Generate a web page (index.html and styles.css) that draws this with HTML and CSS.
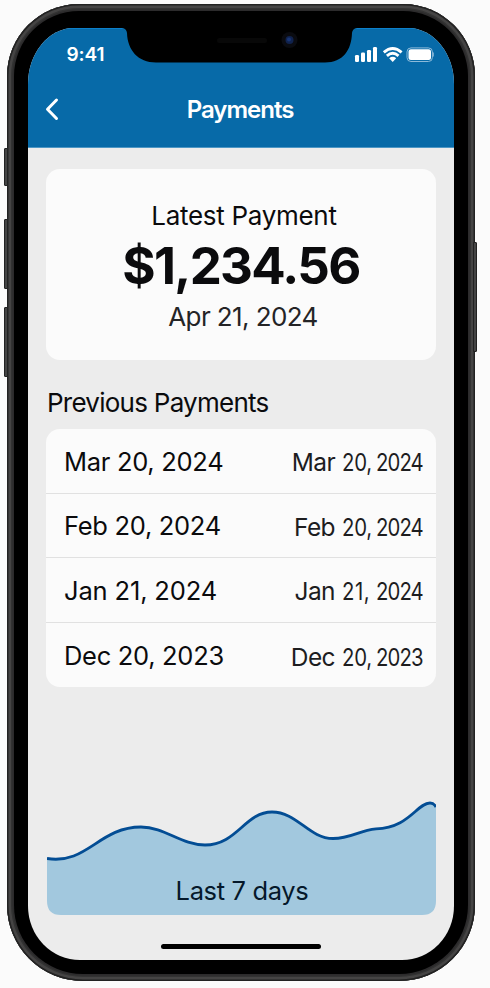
FILE: index.html
```html
<!DOCTYPE html>
<html lang="en">
<head>
<meta charset="utf-8">
<title>Payments</title>
<link rel="stylesheet" href="styles.css">
</head>
<body>
<div class="phone">
  <i class="key key-mute"></i><i class="key key-up"></i><i class="key key-down"></i><i class="key key-power"></i>
  <div class="bezel">
    <main class="screen">
      <header class="header">
        <svg class="notch" viewBox="0 0 232 36" aria-hidden="true">
          <path class="notch-shape" d="M-3 -1H232V0Q227.500 .3 227 5C226.500 22 218 34.500 200 34.500H31C13 34.500 2.500 22 2 5Q1.500 .3 -3 0Z"/>
          <rect x="92" y="10" width="50" height="5" rx="2.500" fill="#080808"/>
          <circle cx="164.500" cy="12" r="8" fill="#0a0b10"/>
          <circle cx="164.500" cy="12" r="4" fill="#10224d"/>
          <circle cx="164" cy="11.500" r="2" fill="#183575"/>
        </svg>
        <div class="status">
          <span class="time">9:41</span>
          <svg class="status-icons" viewBox="0 0 80 18" aria-hidden="true">
            <g fill="#fff">
              <rect x="1" y="10" width="4" height="7" rx="1.200"/>
              <rect x="7" y="7.500" width="4" height="9.500" rx="1.200"/>
              <rect x="13" y="5" width="4" height="12" rx="1.200"/>
              <rect x="19" y="2" width="4" height="15" rx="1.200"/>
              <path d="M35.200 13.300Q38.700 10.400 42.200 13.300L38.700 17Z"/>
              <rect x="54.500" y="4.300" width="22.500" height="10.800" rx="2.500"/>
            </g>
            <g fill="none" stroke="#fff" stroke-width="2.900">
              <path d="M29.800 7.300Q38.700 -.5 47.600 7.300"/>
              <path d="M32.900 10.800Q38.700 5.700 44.500 10.800"/>
            </g>
            <rect x="53" y="2.900" width="25.400" height="13.600" rx="4" fill="none" stroke="#8dbad9" stroke-width="1"/>
            <path d="M79.300 7.500v4" stroke="#8dbad9" stroke-width="1"/>
          </svg>
        </div>
        <div class="nav">
          <svg class="back" viewBox="0 0 16 24" aria-hidden="true"><path d="M12.500 3 3.500 12.200 12.500 21.500"/></svg>
          <h1 class="title">Payments</h1>
        </div>
      </header>

      <section class="card latest">
        <p class="latest-label">Latest Payment</p>
        <p class="latest-amount">$1,234.56</p>
        <p class="latest-date">Apr 21, 2024</p>
      </section>

      <h2 class="section-title">Previous Payments</h2>
      <ul class="card list">
        <li class="row"><span class="row-name">Mar 20, 2024</span><span class="row-date"><span>Mar</span> <span class="num day">20,</span> <span class="num year">2024</span></span></li>
        <li class="row"><span class="row-name">Feb 20, 2024</span><span class="row-date"><span>Feb</span> <span class="num day">20,</span> <span class="num year">2024</span></span></li>
        <li class="row"><span class="row-name wide">Jan 21, 2024</span><span class="row-date"><span>Jan</span> <span class="num day day-wide">21,</span> <span class="num year">2024</span></span></li>
        <li class="row"><span class="row-name">Dec 20, 2023</span><span class="row-date"><span>Dec</span> <span class="num day">20,</span> <span class="num year">2023</span></span></li>
      </ul>

      <figure class="chart">
        <svg class="chart-plot" viewBox="0 0 389 115" aria-hidden="true">
          <path class="area" d="M0 58.500C40 65 52 27 94 27C118 27 134 45 158 45C190 45 198 12 225 12C250 12 262 38.500 286 38.500C304 38.500 312 30.500 329 28.800C362 28 370 3 383 3C386 3 388 5 389 7V101Q389 115 375 115H14Q0 115 0 101Z"/>
          <path class="line" d="M0 58.500C40 65 52 27 94 27C118 27 134 45 158 45C190 45 198 12 225 12C250 12 262 38.500 286 38.500C304 38.500 312 30.500 329 28.800C362 28 370 3 383 3C386 3 388 5 389 7"/>
        </svg>
        <figcaption class="chart-label">Last 7 days</figcaption>
      </figure>
      <div class="home-bar"></div>
    </main>
  </div>
</div>
</body>
</html>
```
FILE: styles.css
```css
* { box-sizing: border-box; margin: 0; padding: 0; }
body {
  width: 490px;
  height: 988px;
  padding: 4px 15px 7px 7px;
  overflow: hidden;
  background: #fbfbfb;
  font-family: Inter, "Liberation Sans", sans-serif;
  color: #0b0b0d;
}
.phone {
  position: relative;
  height: 977px;
  padding: 7px;
  border-radius: 72px 72px 76px 76px;
  background: #2c2b2c;
  box-shadow: inset 0 0 0 1.5px #222, inset 0 0 0 4px #454444, inset 0 0 0 5.5px #333;
}
.key {
  position: absolute;
  left: -3px;
  width: 4px;
  border: 1px solid #222;
  border-radius: 1px 0 0 1px;
  background: #444;
}
.key-mute { top: 144px; height: 38px; }
.key-up { top: 215px; height: 70px; }
.key-down { top: 303px; height: 70px; }
.key-power { left: 466px; top: 238px; height: 110px; border-radius: 0 1px 1px 0; }
.bezel {
  height: 963px;
  padding: 17px 14px 15px;
  border-radius: 65px 65px 69px 69px;
  background: #000;
}
.screen {
  display: flex;
  flex-direction: column;
  height: 932px;
  overflow: hidden;
  border-radius: 46px 46px 52px 52px / 56px 56px 54px 54px;
  background: #ececec;
}
.header {
  position: relative;
  flex: none;
  height: 120px;
  padding-top: 13px;
  background: #076aa8;
  border-bottom: 1px solid #4d97c5;
  box-shadow: inset 0 1px 0 #0c80cb;
}
.notch { position: absolute; left: 97px; top: 0; width: 232px; height: 36px; overflow: visible; }
.notch-shape { fill: #000; }
.status {
  display: flex;
  justify-content: space-between;
  height: 28px;
  padding: 0 20px 0 38.5px;
  color: #fff;
}
.time { font-size: 19px; font-weight: 600; line-height: 28px; letter-spacing: -.1px; }
.status-icons { width: 80px; height: 18px; margin-top: 4px; }
.nav {
  display: grid;
  grid-template-columns: 48px 1fr 48px;
  align-items: center;
  height: 40px;
  margin-top: 20px;
  color: #fff;
}
.back { width: 16px; height: 24px; margin-left: 16px; fill: none; stroke: #fff; stroke-width: 3; stroke-linecap: round; stroke-linejoin: round; }
.title { padding: 1px 2px 0 0; font-size: 24px; font-weight: 600; line-height: 39px; letter-spacing: -1px; text-align: center; }
.card { margin: 0 18px; border-radius: 14px; background: #fbfbfb; }
.latest {
  height: 191px;
  margin-top: 21px;
  padding: 30px 0 0 4px;
  text-align: center;
}
.latest-label { padding-left: 2px; font-size: 26px; line-height: 34px; letter-spacing: -.3px; }
.latest-amount { padding-right: 4px; font-size: 51px; font-weight: 650; line-height: 66px; letter-spacing: -1.7px; }
.latest-date { font-size: 26px; font-weight: 400; line-height: 36px; letter-spacing: -.6px; color: #242426; }
.section-title {
  height: 69px;
  padding: 26px 19px 0;
  font-size: 26px;
  font-weight: 400;
  line-height: 34px;
  letter-spacing: -.75px;
}
.list { height: 258px; list-style: none; }
.row {
  display: flex;
  justify-content: space-between;
  align-items: center;
  height: 64.6px;
  padding: 1px 13px 0 18px;
  border-bottom: 1px solid #e1e1e1;
}
.row:last-child { border-bottom: 0; }
.row-name { font-size: 25.5px; letter-spacing: -.3px; }
.row-name.wide { letter-spacing: -.15px; }
.row-date { display: flex; padding-top: 2px; font-size: 24.5px; font-weight: 400; letter-spacing: -.6px; white-space: nowrap; color: #1d1d1f; }
.num { transform: scaleX(.83); transform-origin: left; }
.day { width: 34px; margin-left: 7px; letter-spacing: -.3px; }
.day-wide { letter-spacing: .7px; }
.year { width: 47px; letter-spacing: -1.1px; }
.chart { display: grid; flex: none; width: 389px; height: 115px; margin: 113px 0 0 19px; }
.chart-plot, .chart-label { grid-area: 1 / 1; }
.chart-plot { width: 389px; height: 115px; }
.area { fill: #a2c8de; }
.line { fill: none; stroke: #034d94; stroke-width: 2.8; }
.chart-label {
  align-self: end;
  padding: 0 0 7px 1px;
  font-size: 25.5px;
  line-height: 34px;
  letter-spacing: -.35px;
  text-align: center;
  color: #05182a;
}
.home-bar { width: 160px; height: 5px; margin: 29px auto 0; border-radius: 3px; background: #000; }
```
